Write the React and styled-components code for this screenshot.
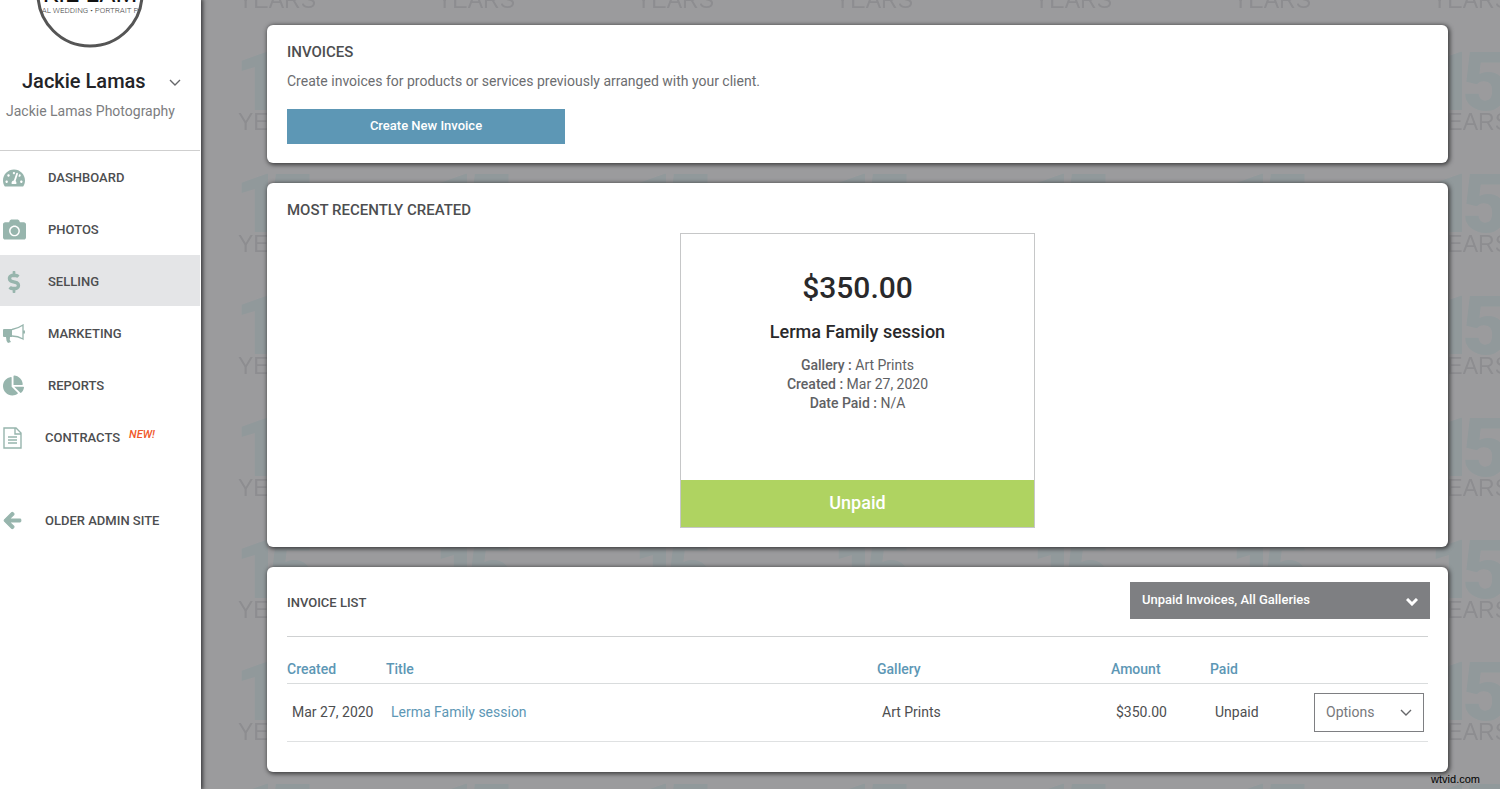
import React from 'react';
import styled, { createGlobalStyle } from 'styled-components';
import { FaCamera, FaChartPie, FaDollarSign, FaTachometerAlt, FaArrowLeft } from 'react-icons/fa';

const teal = '#97b5ad';
const blue = '#5d97b5';

// repeating anniversary watermark behind the cards
const tile = encodeURIComponent(`
<svg xmlns="http://www.w3.org/2000/svg" width="199" height="122">
  <g fill="#91999b" font-family="Roboto, sans-serif" font-weight="900" font-size="81">
    <text x="34" y="99">1</text>
    <text x="67" y="99">5</text>
  </g>
  <text x="37" y="119" fill="#8d8d90" font-family="'Liberation Sans', sans-serif" font-size="23">YEARS</text>
</svg>`);

const GlobalStyle = createGlobalStyle`
  * {
    box-sizing: border-box;
  }

  body {
    margin: 0;
    background: #9b9b9d;
    color: #4d4e50;
    font-family: Roboto, 'Liberation Sans', sans-serif;
    font-size: 14px;
    line-height: 20px;
  }
`;

const Page = styled.div`
  display: flex;
  min-height: 100vh;
`;

const Sidebar = styled.aside`
  position: relative;
  flex: 0 0 201px;
  border-right: 1px solid #fff;
  background: #fff;
  box-shadow: 1px 0 4px 1px #3c3c3e;
`;

const Logo = styled.svg`
  display: block;
  width: 120px;
  height: 50px;
  margin-left: 30px;
`;

const Profile = styled.div`
  height: 101px;
  padding-top: 16px;
  border-bottom: 1px solid #cfcfcf;
`;

const ProfileButton = styled.button`
  display: flex;
  align-items: center;
  justify-content: space-between;
  width: 100%;
  padding: 0 19px 0 22px;
  border: 0;
  background: none;
  color: #232427;
  font: 500 20px/30px Roboto, sans-serif;
  cursor: pointer;

  svg {
    margin-top: 4px;
    color: #66676a;
  }
`;

const Business = styled.p`
  margin: 5px 0 0 6px;
  color: #7c7d80;
`;

const Nav = styled.nav`
  display: flex;
  flex-direction: column;
  gap: 1px;
`;

const NavLink = styled.a`
  display: flex;
  align-items: center;
  height: 51px;
  margin-top: ${({ $apart }) => ($apart ? '31px' : '0')};
  padding: 2px 0 0 3px;
  background: ${({ $active }) => ($active ? '#e4e5e7' : 'transparent')};
  color: #4d4e50;
  font-size: 13px;
  font-weight: 500;
  text-decoration: none;
`;

const NavIcon = styled.span`
  display: flex;
  flex: 0 0 ${({ $narrow }) => ($narrow ? '42px' : '45px')};
  color: ${teal};
`;

const NewTag = styled.em`
  margin: 0 0 6px 9px;
  color: #f0592b;
  font-size: 11px;
`;

const Main = styled.main`
  display: flex;
  flex: 1;
  flex-direction: column;
  gap: 20px;
  min-width: 0;
  padding: 25px 52px 17px 66px;
  background: url("data:image/svg+xml,${tile}") 0 11px;
`;

const Card = styled.section`
  padding: 17px 20px 19px;
  border-radius: 6px;
  background: #fff;
  box-shadow: 1px 1px 4px 1px #3f3f41;
`;

const Heading = styled.h2`
  margin: 0;
  padding-top: ${({ $small }) => ($small ? '5px' : '0')};
  font-size: ${({ $small }) => ($small ? '13px' : '15px')};
  font-weight: 500;
  line-height: 20px;
`;

const Intro = styled.p`
  margin: 9px 0 18px;
  color: #6c6d70;
`;

const CreateButton = styled.button`
  display: block;
  width: 278px;
  height: 35px;
  padding: 0 0 2px;
  border: 0;
  background: ${blue};
  color: #fff;
  font: 500 13px/20px Roboto, sans-serif;
  cursor: pointer;
`;

const Invoice = styled.article`
  width: 355px;
  margin: 13px auto 0;
  border: 1px solid #c6c7c8;
  text-align: center;
`;

const InvoiceBody = styled.div`
  height: 246px;
  padding-top: 34px;
`;

const Amount = styled.div`
  color: #29292b;
  font-size: 30px;
  font-weight: 500;
  line-height: 40px;
`;

const SessionTitle = styled.h3`
  margin: 12px 0;
  color: #29292b;
  font-size: 18px;
  font-weight: 500;
  line-height: 24px;
`;

const Detail = styled.div`
  color: #606164;
  line-height: 19px;

  b {
    font-weight: 500;
  }
`;

const Status = styled.div`
  height: 47px;
  background: #afd361;
  color: #fff;
  font-size: 18px;
  font-weight: 500;
  line-height: 46px;
`;

const ListHeader = styled.div`
  display: flex;
  align-items: center;
  justify-content: space-between;
  height: 55px;
  margin-top: -2px;
  padding-bottom: 17px;
  border-bottom: 1px solid #cfd1d2;
`;

const SelectBox = styled.div`
  position: relative;
  display: inline-flex;
  margin-right: ${({ $wide }) => ($wide ? '-2px' : '0')};
  color: ${({ $wide }) => ($wide ? '#fff' : '#66676a')};

  svg {
    position: absolute;
    top: 50%;
    right: 12px;
    margin-top: -3px;
    pointer-events: none;
  }
`;

const FilterSelect = styled.select`
  width: 300px;
  height: 37px;
  padding: 0 32px 2px 12px;
  border: 0;
  border-radius: 0;
  appearance: none;
  background: #7e7f82;
  color: #fff;
  font: 500 13px/20px Roboto, sans-serif;
`;

const OptionsSelect = styled.select`
  width: 110px;
  height: 39px;
  padding: 0 28px 0 11px;
  border: 1px solid #7e7f82;
  border-radius: 0;
  appearance: none;
  background: #fff;
  color: #77787b;
  font: 400 14px/20px Roboto, sans-serif;
`;

const Table = styled.table`
  width: 100%;
  margin: 21px 0 11px;
  border-collapse: collapse;
  table-layout: fixed;
`;

const Th = styled.th`
  width: ${({ $width }) => $width || 'auto'};
  height: 25px;
  padding: 0 0 3px;
  border-bottom: 1px solid #d9dcdd;
  color: ${blue};
  font-weight: 500;
  text-align: left;
`;

const Td = styled.td`
  height: 58px;
  padding: 0 5px;
  border-bottom: 1px solid #dfe1e2;
  text-align: ${({ $right }) => ($right ? 'right' : 'left')};
  white-space: nowrap;
`;

const TitleLink = styled.a`
  color: ${blue};
  text-decoration: none;
`;

const Credit = styled.div`
  position: absolute;
  right: 20px;
  bottom: 2px;
  color: #000;
  font: 11px/16px 'Liberation Sans', sans-serif;
`;

const Chevron = ({ stroke = 1.4 }) => (
  <svg width="12" height="8" viewBox="0 0 12 8" fill="none" stroke="currentColor" strokeWidth={stroke} aria-hidden="true">
    <path d="M1 1l5 5 5-5" />
  </svg>
);

const MegaphoneIcon = () => (
  <svg width="22" height="20" viewBox="0 0 22 20" aria-hidden="true">
    <path d="M1 5h8v8H7q-1 3 1 5l-3 1q-2-2-2-6H1q-1 0-1-1V6q0-1 1-1z" fill={teal} />
    <path d="M9 5.500q6-1 11-4.500v14q-5-3-11-3M21.300 6.500v3" fill="none" stroke={teal} strokeWidth="1.300" />
  </svg>
);

const DocumentIcon = () => (
  <svg width="20" height="22" viewBox="0 0 20 22" fill="none" stroke={teal} strokeWidth="1.400" aria-hidden="true">
    <path d="M1 1h12l5 5v15H1zM12 1v6h6M5 10h9M5 13h9M5 16h9" />
  </svg>
);

const App = () => (
  <>
    <GlobalStyle />
    <Page>
      <Sidebar>
        <Logo viewBox="0 0 120 50" role="img" aria-label="Jackie Lamas Photography logo">
          <circle cx="60" cy="-6" r="52" fill="#fff" stroke="#555" strokeWidth="3" />
          <text x="60" y="2" textAnchor="middle" fontSize="25" fill="#111">KIE LAM</text>
          <text x="60" y="13" textAnchor="middle" fontSize="8" fontWeight="300" fill="#444">AL WEDDING • PORTRAIT P</text>
        </Logo>
        <Profile>
          <ProfileButton type="button">
            Jackie Lamas
            <Chevron />
          </ProfileButton>
          <Business>Jackie Lamas Photography</Business>
        </Profile>
        <Nav>
          <NavLink href="#dashboard"><NavIcon><FaTachometerAlt size={22} /></NavIcon>DASHBOARD</NavLink>
          <NavLink href="#photos"><NavIcon><FaCamera size={23} /></NavIcon>PHOTOS</NavLink>
          <NavLink href="#selling" $active><NavIcon><FaDollarSign size={22} /></NavIcon>SELLING</NavLink>
          <NavLink href="#marketing"><NavIcon><MegaphoneIcon /></NavIcon>MARKETING</NavLink>
          <NavLink href="#reports"><NavIcon><FaChartPie size={21} /></NavIcon>REPORTS</NavLink>
          <NavLink href="#contracts"><NavIcon $narrow><DocumentIcon /></NavIcon>CONTRACTS<NewTag>NEW!</NewTag></NavLink>
          <NavLink href="#older" $apart>
            <NavIcon $narrow><FaArrowLeft size={19} stroke="currentColor" strokeWidth="30" /></NavIcon>
            OLDER ADMIN SITE
          </NavLink>
        </Nav>
      </Sidebar>
      <Main>
        <Card>
          <Heading>INVOICES</Heading>
          <Intro>Create invoices for products or services previously arranged with your client.</Intro>
          <CreateButton type="button">Create New Invoice</CreateButton>
        </Card>
        <Card>
          <Heading>MOST RECENTLY CREATED</Heading>
          <Invoice>
            <InvoiceBody>
              <Amount>$350.00</Amount>
              <SessionTitle>Lerma Family session</SessionTitle>
              <Detail><b>Gallery :</b> Art Prints</Detail>
              <Detail><b>Created :</b> Mar 27, 2020</Detail>
              <Detail><b>Date Paid :</b> N/A</Detail>
            </InvoiceBody>
            <Status>Unpaid</Status>
          </Invoice>
        </Card>
        <Card>
          <ListHeader>
            <Heading $small>INVOICE LIST</Heading>
            <SelectBox $wide>
              <FilterSelect aria-label="Filter invoices">
                <option>Unpaid Invoices, All Galleries</option>
              </FilterSelect>
              <Chevron stroke={3} />
            </SelectBox>
          </ListHeader>
          <Table>
            <thead>
              <tr>
                <Th $width="99px">Created</Th>
                <Th>Title</Th>
                <Th $width="234px">Gallery</Th>
                <Th $width="99px">Amount</Th>
                <Th $width="99px">Paid</Th>
                <Th $width="119px" aria-label="Options" />
              </tr>
            </thead>
            <tbody>
              <tr>
                <Td>Mar 27, 2020</Td>
                <Td><TitleLink href="#invoice">Lerma Family session</TitleLink></Td>
                <Td>Art Prints</Td>
                <Td>$350.00</Td>
                <Td>Unpaid</Td>
                <Td $right>
                  <SelectBox>
                    <OptionsSelect aria-label="Invoice options">
                      <option>Options</option>
                    </OptionsSelect>
                    <Chevron />
                  </SelectBox>
                </Td>
              </tr>
            </tbody>
          </Table>
        </Card>
      </Main>
    </Page>
    <Credit>wtvid.com</Credit>
  </>
);

export default App;
